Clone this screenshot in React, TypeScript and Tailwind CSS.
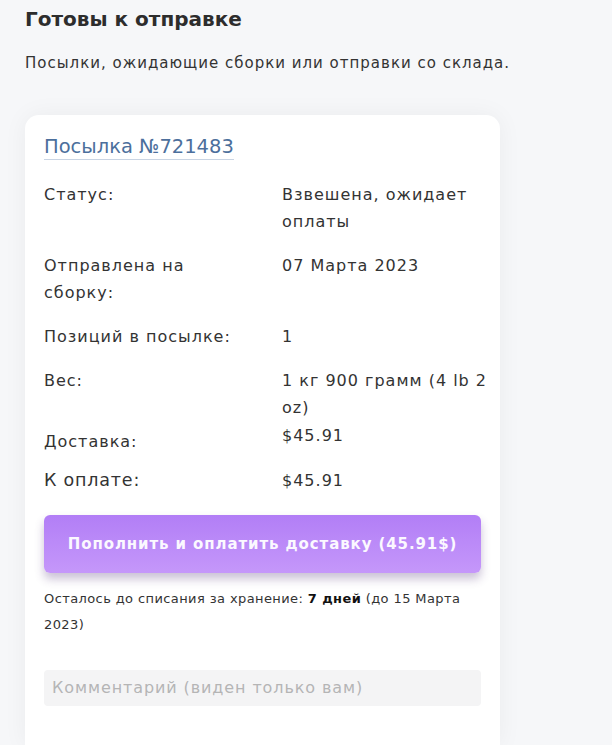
import React from 'react';

const ROWS = [
  { label: 'Статус:', value: 'Взвешена, ожидает оплаты' },
  { label: 'Отправлена на сборку:', value: '07 Марта 2023' },
  { label: 'Позиций в посылке:', value: '1' },
  { label: 'Вес:', value: '1 кг 900 грамм (4 lb 2 oz)' },
];

export default function App() {
  return (
    <div
      className="h-[745px] w-full bg-[#f6f7f9] text-[#2b2b2b] overflow-hidden"
      style={{ fontFamily: '"DejaVu Sans", "Open Sans", sans-serif' }}
    >
      <div className="pl-[25px] pt-[5px]">
        <h1 className="text-[20px] font-semibold leading-[28px] text-[#2d2d2d]">Готовы к отправке</h1>
        <p className="mt-[20px] text-[15px] leading-[20px] tracking-[1px] text-[#333]">
          Посылки, ожидающие сборки или отправки со склада.
        </p>

        <div className="mt-[42px] w-[475px] rounded-t-[14px] bg-white px-[19px] pt-[20px] pb-[40px] shadow-[0_0_24px_rgba(0,0,0,0.05)]">
          <a className="inline-block border-b border-[#c9d4e3] text-[19.5px] leading-[24px] text-[#4c6f9c]">
            Посылка №721483
          </a>

          <div className="mt-[21px] flex flex-col gap-[17px] text-[16px] leading-[27px] tracking-[1px] text-[#333]">
            {ROWS.map(r => (
              <div key={r.label} className="flex">
                <div className="w-[238px] shrink-0 pr-[30px]">{r.label}</div>
                <div className="flex-1 -mr-[16px]">{r.value}</div>
              </div>
            ))}
          </div>

          <div className="mt-[1px] flex text-[16px] leading-[27px] tracking-[1px] text-[#333]">
            <div className="w-[238px] shrink-0 pt-[6px]">Доставка:</div>
            <div className="flex-1">$45.91</div>
          </div>

          <div className="mt-[12px] flex items-center text-[17.5px] leading-[27px] tracking-[0.8px] text-[#333]">
            <div className="w-[238px] shrink-0">К оплате:</div>
            <div className="flex-1 text-[16px] tracking-[1px]">$45.91</div>
          </div>

          <button className="mt-[21px] h-[58px] w-full rounded-[6px] bg-gradient-to-b from-[#b27ef6] to-[#c597fa] text-[15px] font-bold tracking-[0.06em] text-[#fbf8ff] shadow-[0_6px_10px_rgba(80,50,120,0.3)]">
            Пополнить и оплатить доставку (45.91$)
          </button>

          <p className="mt-[13px] text-[13px] leading-[26px] tracking-[0.4px] text-[#333]">
            Осталось до списания за хранение: <span className="font-bold text-[#111]">7 дней</span> (до 15 Марта 2023)
          </p>

          <div className="mt-[32px] h-[36px] w-full rounded-[4px] bg-[#f4f4f5] px-[8px] text-[16px] leading-[36px] tracking-[0.9px] text-[#b5b5b5]">
            Комментарий (виден только вам)
          </div>
        </div>
      </div>
    </div>
  );
}
